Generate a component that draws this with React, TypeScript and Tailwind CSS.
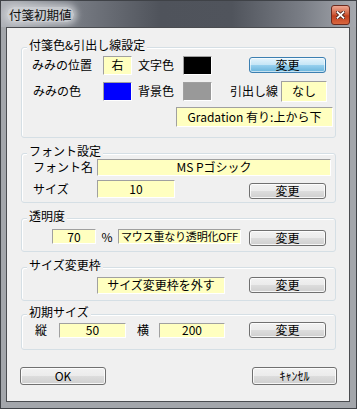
import type { ReactNode } from "react";

function Field({ className, children }: { className: string; children?: ReactNode }) {
  return (
    <div
      className={`flex items-center justify-center whitespace-nowrap overflow-hidden bg-[#ffffc0] border border-t-[#a0a0a0] border-l-[#a0a0a0] border-r-white border-b-white leading-none ${className}`}
    >
      {children}
    </div>
  );
}

function Swatch({ className }: { className: string }) {
  return (
    <div
      className={`border border-t-[#a0a0a0] border-l-[#a0a0a0] border-r-white border-b-white ${className}`}
    />
  );
}

function Btn({ className, children, focused }: { className: string; children: ReactNode; focused?: boolean }) {
  return (
    <button
      type="button"
      className={
        focused
          ? `flex items-center justify-center leading-none rounded-[3px] border border-[#3c7fb1] bg-[linear-gradient(to_bottom,#e5f4fc_0%,#c4e5f6_50%,#98d1ef_50%,#68b3db_100%)] shadow-[inset_0_0_0_1px_rgba(255,255,255,0.6)] ${className}`
          : `flex items-center justify-center leading-none rounded-[3px] border border-[#707070] bg-[linear-gradient(to_bottom,#f2f2f2_0%,#ebebeb_50%,#dddddd_50%,#cfcfcf_100%)] shadow-[inset_0_0_0_1px_rgba(255,255,255,0.8)] ${className}`
      }
    >
      {children}
    </button>
  );
}

function Group({ title, className, children }: { title: string; className: string; children: ReactNode }) {
  return (
    <div
      className={`relative w-[315px] rounded-[3px] border border-[#d5dfe5] shadow-[inset_1px_1px_0_#ffffff] ${className}`}
    >
      <span className="absolute left-[5px] top-[-10px] px-[2px] bg-[#f0f0f0] leading-[14px]">{title}</span>
      {children}
    </div>
  );
}

function TitleBar() {
  return (
    <div className="flex items-start h-[26px] w-full bg-[#5a5e66]">
      <div className="flex-1 h-[26px] flex items-start bg-[linear-gradient(90deg,#b0b3b9,#7c8088_18%,#4f535b_45%,#50545c_65%,#7a7e86_85%,#a6a9af)]">
        <span className="mt-[6px] ml-[6px] px-[2px] leading-[15px] text-[12.5px] text-[#101010] bg-[#d6d8dc]/80 rounded-[7px] shadow-[0_0_6px_3px_rgba(214,216,220,0.75)]">
          付箋初期値
        </span>
        <span className="ml-auto mr-[6px] mt-[4px] w-[19px] h-[20px] rounded-[3px] border border-[#6b2a1e] bg-[linear-gradient(180deg,#eda792,#d0603f_45%,#c2401f_55%,#d9673f)] flex items-center justify-center">
          <svg width="9" height="8" viewBox="0 0 9 8">
            <path d="M1.5 1.2 L7.5 6.8 M7.5 1.2 L1.5 6.8" stroke="#4a2018" strokeWidth="3.4" strokeLinecap="square" />
            <path d="M1.5 1.2 L7.5 6.8 M7.5 1.2 L1.5 6.8" stroke="#ffffff" strokeWidth="1.8" strokeLinecap="square" />
          </svg>
        </span>
      </div>
    </div>
  );
}

export default function App() {
  return (
    <div className="w-[357px] h-[409px] flex flex-col bg-[#a3a6ab] border border-[#3f4247] text-[12px] text-black font-['Noto_Sans_CJK_JP','Noto_Sans',sans-serif]">
      <TitleBar />

      {/* client area */}
      <div className="ml-[5px] w-[344px] h-[375px] border border-[#4a4c50] bg-[#f0f0f0] flex flex-col pl-[14px]">
        {/* 付箋色＆引出し線設定 */}
        <Group title="付箋色&引出し線設定" className="mt-[19px] h-[91px]">
          <div className="flex items-center h-[20px] mt-[7px] pl-[10px]">
            <span className="w-[71px]">みみの位置</span>
            <Field className="w-[29px] h-[19px]">右</Field>
            <span className="ml-[6px] w-[36px]">文字色</span>
            <Swatch className="ml-[9px] w-[29px] h-[19px] bg-black" />
            <Btn focused className="ml-[37px] w-[77px] h-[16px]">変更</Btn>
          </div>
          <div className="flex items-center h-[22px] mt-[5px] pl-[11px]">
            <span className="w-[70px]">みみの色</span>
            <Swatch className="w-[29px] h-[19px] bg-[#0000ff]" />
            <span className="ml-[6px] w-[36px]">背景色</span>
            <Swatch className="ml-[9px] w-[29px] h-[19px] bg-[#999999]" />
            <span className="ml-[18px] w-[51px]">引出し線</span>
            <Field className="w-[46px] h-[21px]">なし</Field>
          </div>
          <div className="flex mt-[5px] pl-[154px]">
            <Field className="w-[157px] h-[20px]">Gradation 有り:上から下</Field>
          </div>
        </Group>

        {/* フォント設定 */}
        <Group title="フォント設定" className="mt-[15px] h-[50px]">
          <div className="flex items-center mt-[4px] pl-[11px]">
            <span className="w-[64px]">フォント名</span>
            <Field className="w-[234px] h-[17px]">MS Pゴシック</Field>
          </div>
          <div className="flex items-start mt-[4px] pl-[11px]">
            <span className="w-[64px] leading-[18px]">サイズ</span>
            <Field className="w-[78px] h-[18px]">10</Field>
            <Btn className="ml-[74px] mt-[3px] w-[77px] h-[16px]">変更</Btn>
          </div>
        </Group>

        {/* 透明度 */}
        <Group title="透明度" className="mt-[15px] h-[34px]">
          <div className="flex items-start mt-[10px] pl-[30px]">
            <Field className="w-[44px] h-[15px]">70</Field>
            <span className="w-[22px] text-center leading-[15px]">%</span>
            <Field className="w-[123px] h-[15px] text-[11px] tracking-[-0.2px]">マウス重なり透明化OFF</Field>
            <Btn className="ml-[8px] mt-[1px] w-[77px] h-[16px]">変更</Btn>
          </div>
        </Group>

        {/* サイズ変更枠 */}
        <Group title="サイズ変更枠" className="mt-[15px] h-[34px]">
          <div className="flex items-center mt-[7px] pl-[75px] h-[20px]">
            <Field className="w-[128px] h-[17px]">サイズ変更枠を外す</Field>
            <Btn className="ml-[24px] w-[77px] h-[16px]">変更</Btn>
          </div>
        </Group>

        {/* 初期サイズ */}
        <Group title="初期サイズ" className="mt-[13px] h-[36px]">
          <div className="flex items-center mt-[7px] pl-[13px] h-[16px]">
            <span className="w-[24px]">縦</span>
            <Field className="w-[67px] h-[15px]">50</Field>
            <span className="ml-[11px] w-[22px]">横</span>
            <Field className="w-[66px] h-[15px]">200</Field>
            <Btn className="ml-[24px] w-[77px] h-[16px]">変更</Btn>
          </div>
        </Group>

        {/* OK / キャンセル */}
        <div className="flex mt-[17px] w-[316px]">
          <Btn className="-ml-px w-[86px] h-[18px]">OK</Btn>
          <Btn className="ml-auto w-[85px] h-[18px]">ｷｬﾝｾﾙ</Btn>
        </div>
      </div>
    </div>
  );
}
